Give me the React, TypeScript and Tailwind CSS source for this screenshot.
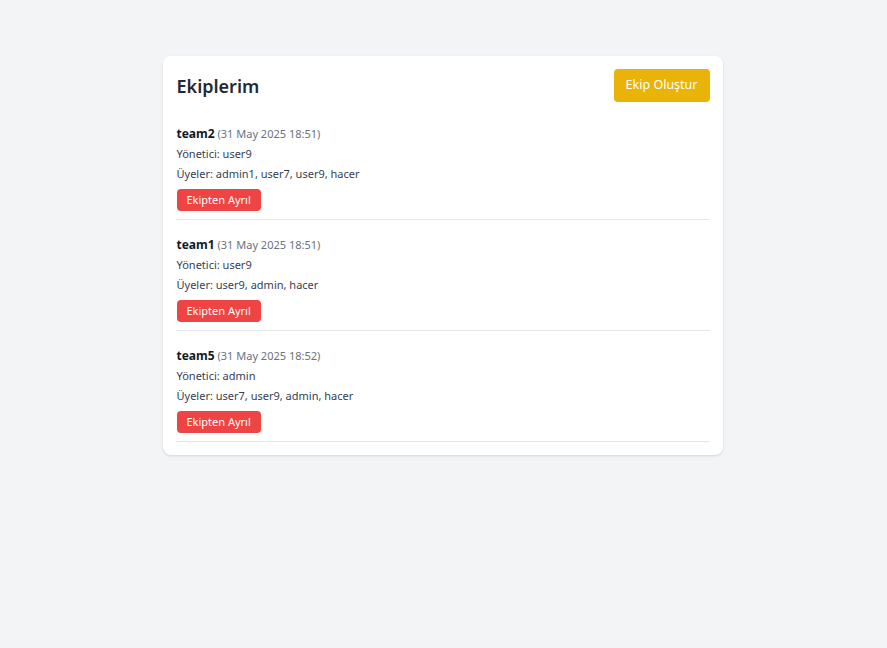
import React from "react";

const teams = [
  { name: "team2", date: "31 May 2025 18:51", manager: "user9", members: "admin1, user7, user9, hacer" },
  { name: "team1", date: "31 May 2025 18:51", manager: "user9", members: "user9, admin, hacer" },
  { name: "team5", date: "31 May 2025 18:52", manager: "admin", members: "user7, user9, admin, hacer" },
];

export default function App() {
  return (
    <div className="min-h-screen bg-[#f3f4f6] pt-[56px] font-['Noto_Sans',sans-serif]">
      <div className="mx-auto w-[560px] -translate-x-px rounded-lg bg-white p-[13px] shadow">
        {/* Header */}
        <div className="mb-[21px] flex items-center justify-between">
          <h2 className="pl-px text-lg font-semibold text-gray-800">Ekiplerim</h2>
          <button className="h-[33px] rounded bg-[#eab308] px-3 text-[12.5px] text-white">
            Ekip Oluştur
          </button>
        </div>

        {/* Team list */}
        {teams.map((t) => (
          <div key={t.name} className="mb-[14px] border-b border-gray-200 pb-2 pl-px last:mb-0">
            <div className="pt-px text-[11px] leading-5">
              <span className="text-xs font-bold text-gray-900">{t.name}</span>{" "}
              <span className="text-gray-500">({t.date})</span>
            </div>
            <div className="text-[11px] leading-5 text-gray-700">Yönetici: {t.manager}</div>
            <div className="text-[11px] leading-5 text-gray-700">Üyeler: {t.members}</div>
            <button className="mt-[5px] h-[22px] rounded bg-[#ef4444] px-2.5 text-[11px] text-white">
              Ekipten Ayrıl
            </button>
          </div>
        ))}
      </div>
    </div>
  );
}
